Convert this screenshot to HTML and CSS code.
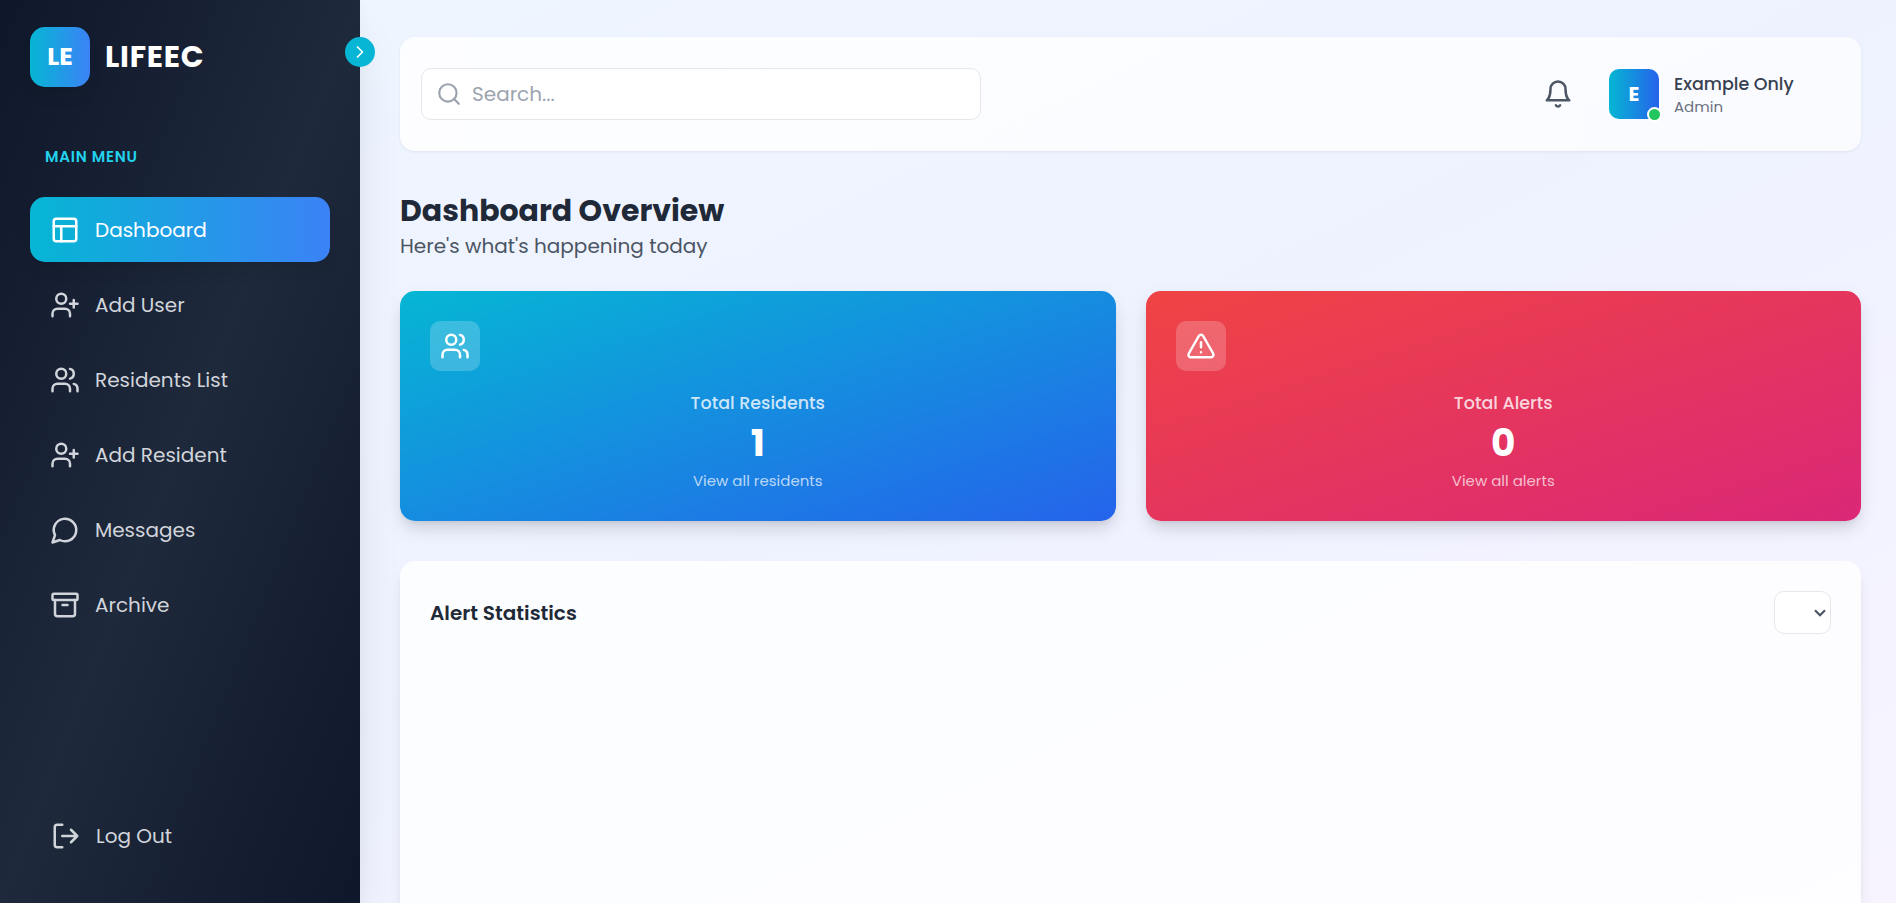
FILE: index.html
```html
<!DOCTYPE html>
<html lang="en">
<head>
<meta charset="utf-8">
<title>LIFEEC Dashboard</title>
<link rel="stylesheet" href="styles.css">
</head>
<body>
<svg class="sprite" aria-hidden="true">
  <symbol id="i-layout" viewBox="0 0 24 24"><rect x="3" y="3" width="18" height="18" rx="2"/><path d="M3 9h18M9 21V9"/></symbol>
  <symbol id="i-user-plus" viewBox="0 0 24 24"><path d="M16 21v-2a4 4 0 0 0-4-4H6a4 4 0 0 0-4 4v2"/><circle cx="9" cy="7" r="4"/><path d="M19 8v6M22 11h-6"/></symbol>
  <symbol id="i-users" viewBox="0 0 24 24"><path d="M16 21v-2a4 4 0 0 0-4-4H6a4 4 0 0 0-4 4v2"/><circle cx="9" cy="7" r="4"/><path d="M22 21v-2a4 4 0 0 0-3-3.87M16 3.13a4 4 0 0 1 0 7.75"/></symbol>
  <symbol id="i-message" viewBox="0 0 24 24"><path d="M7.9 20A9 9 0 1 0 4 16.1L2 22Z"/></symbol>
  <symbol id="i-archive" viewBox="0 0 24 24"><rect x="2" y="3" width="20" height="5" rx="1"/><path d="M4 8v11a2 2 0 0 0 2 2h12a2 2 0 0 0 2-2V8M10 12h4"/></symbol>
  <symbol id="i-logout" viewBox="0 0 24 24"><path d="M9 21H5a2 2 0 0 1-2-2V5a2 2 0 0 1 2-2h4M16 17l5-5-5-5M21 12H9"/></symbol>
  <symbol id="i-search" viewBox="0 0 24 24"><circle cx="11" cy="11" r="8"/><path d="m21 21-4.3-4.3"/></symbol>
  <symbol id="i-bell" viewBox="0 0 24 24"><path d="M6 8a6 6 0 0 1 12 0c0 7 3 9 3 9H3s3-2 3-9M10.3 21a1.94 1.94 0 0 0 3.4 0"/></symbol>
  <symbol id="i-alert" viewBox="0 0 24 24"><path d="m21.73 18-8-14a2 2 0 0 0-3.48 0l-8 14A2 2 0 0 0 4 21h16a2 2 0 0 0 1.73-3M12 9v4M12 17h.01"/></symbol>
  <symbol id="i-right" viewBox="0 0 24 24"><path d="m9 18 6-6-6-6"/></symbol>
</svg>

<div class="app">
  <aside class="sidebar">
    <div class="brand">
      <div class="brand-mark">LE</div>
      <span class="brand-name">LIFEEC</span>
    </div>
    <button class="toggle" aria-label="Toggle sidebar"><svg class="icon"><use href="#i-right"/></svg></button>
    <div class="menu-label">MAIN MENU</div>
    <nav class="nav">
      <a class="nav-item active"><svg class="icon"><use href="#i-layout"/></svg><span>Dashboard</span></a>
      <a class="nav-item"><svg class="icon"><use href="#i-user-plus"/></svg><span>Add User</span></a>
      <a class="nav-item"><svg class="icon"><use href="#i-users"/></svg><span>Residents List</span></a>
      <a class="nav-item"><svg class="icon"><use href="#i-user-plus"/></svg><span>Add Resident</span></a>
      <a class="nav-item"><svg class="icon"><use href="#i-message"/></svg><span>Messages</span></a>
      <a class="nav-item"><svg class="icon"><use href="#i-archive"/></svg><span>Archive</span></a>
    </nav>
    <a class="nav-item logout"><svg class="icon"><use href="#i-logout"/></svg><span>Log Out</span></a>
  </aside>

  <main class="main">
    <header class="topbar">
      <div class="search">
        <svg class="icon"><use href="#i-search"/></svg>
        <span>Search...</span>
      </div>
      <div class="account">
        <svg class="icon bell"><use href="#i-bell"/></svg>
        <div class="avatar">E<i class="status"></i></div>
        <div class="who">
          <div class="who-name">Example Only</div>
          <div class="who-role">Admin</div>
        </div>
      </div>
    </header>

    <section class="heading">
      <h1>Dashboard Overview</h1>
      <p>Here's what's happening today</p>
    </section>

    <section class="cards">
      <article class="card residents">
        <div class="card-icon"><svg class="icon"><use href="#i-users"/></svg></div>
        <div class="card-title">Total Residents</div>
        <div class="card-value">1</div>
        <div class="card-link">View all residents</div>
      </article>
      <article class="card alerts">
        <div class="card-icon"><svg class="icon"><use href="#i-alert"/></svg></div>
        <div class="card-title">Total Alerts</div>
        <div class="card-value">0</div>
        <div class="card-link">View all alerts</div>
      </article>
    </section>

    <section class="panel">
      <div class="panel-head">
        <h2>Alert Statistics</h2>
        <div class="select"><svg viewBox="0 0 12 8"><path d="M1 1.2l5 5 5-5"/></svg></div>
      </div>
    </section>
  </main>
</div>
</body>
</html>
```

FILE: styles.css
```css
* { box-sizing: border-box; margin: 0; padding: 0; }

body {
  font-family: Poppins, Inter, "Open Sans", sans-serif;
  font-size: 20px;
  line-height: 30px;
  height: 903px;
  overflow: hidden;
}

.sprite { display: none; }

.icon {
  width: 30px;
  height: 30px;
  flex: none;
  fill: none;
  stroke: currentColor;
  stroke-width: 2;
  stroke-linecap: round;
  stroke-linejoin: round;
}

.app {
  display: flex;
  height: 903px;
  background: linear-gradient(to bottom right, #eff6ff, #eef2ff 50%, #f7f4ff);
}

/* Sidebar */
.sidebar {
  position: relative;
  z-index: 2;
  display: flex;
  flex-direction: column;
  width: 360px;
  flex: none;
  padding: 27px 30px 35px;
  background: linear-gradient(to bottom right, #0f172a, #1e293b 50%, #0f172a);
  box-shadow: 0 25px 50px -12px rgba(0, 0, 0, .12), 0 0 14px rgba(0, 0, 0, .03);
}

.brand { display: flex; align-items: center; gap: 15px; height: 60px; }

.brand-mark {
  display: grid;
  place-items: center;
  width: 60px;
  height: 60px;
  border-radius: 15px;
  background: linear-gradient(to right, #06b6d4, #3b82f6);
  box-shadow: 0 10px 15px -3px rgba(0, 0, 0, .1);
  color: #fff;
  font-size: 25px;
  font-weight: 700;
}

.brand-name { color: #fff; font-size: 30px; font-weight: 700; letter-spacing: .025em; }

.toggle {
  position: absolute;
  top: 37px;
  right: -15px;
  display: grid;
  place-items: center;
  width: 30px;
  height: 30px;
  border: 0;
  border-radius: 50%;
  background: #06b6d4;
  color: #fff;
}

.toggle .icon { width: 20px; height: 20px; }

.menu-label {
  margin: 55px 0 25px 15px;
  color: #22d3ee;
  font-size: 15px;
  font-weight: 600;
  letter-spacing: .05em;
}

.nav { display: flex; flex-direction: column; gap: 10px; }

.nav-item {
  display: flex;
  align-items: center;
  gap: 15px;
  height: 65px;
  padding: 0 20px;
  border-radius: 15px;
  color: #d1d5db;
}

.nav-item.active {
  background: linear-gradient(to right, #06b6d4, #3b82f6);
  box-shadow: 0 10px 15px -3px rgba(0, 0, 0, .1);
  color: #fff;
}

.logout { margin-top: auto; padding-left: 21px; }

/* Main column */
.main {
  display: flex;
  flex: 1;
  flex-direction: column;
  padding: 37px 35px 0 40px;
}

.topbar {
  display: flex;
  flex: none;
  align-items: center;
  justify-content: space-between;
  height: 114px;
  padding: 0 67px 0 21px;
  border-radius: 15px;
  background: linear-gradient(to right, rgba(255, 255, 255, .85), rgba(255, 255, 255, .7));
  box-shadow: 0 1px 3px rgba(0, 0, 0, .07);
}

.search {
  display: flex;
  align-items: center;
  gap: 10px;
  width: 560px;
  height: 52px;
  padding: 0 14px;
  border: 1px solid #e5e7eb;
  border-radius: 10px;
  background: #fff;
  color: #9ca3af;
}

.search .icon { width: 26px; height: 26px; }

.account { display: flex; align-items: center; }
.bell { margin-right: 36px; color: #4b5563; }

.avatar {
  position: relative;
  display: grid;
  place-items: center;
  width: 50px;
  height: 50px;
  margin-right: 15px;
  border-radius: 10px;
  background: linear-gradient(to right, #06b6d4, #2563eb);
  color: #fff;
  font-weight: 700;
}

.status {
  position: absolute;
  right: -3px;
  bottom: -3px;
  width: 15px;
  height: 15px;
  border: 2px solid #fff;
  border-radius: 50%;
  background: #22c55e;
}

.who { width: 120px; white-space: nowrap; }
.who-name { color: #374151; font-size: 17.5px; font-weight: 500; line-height: 25px; }
.who-role { color: #6b7280; font-size: 15px; line-height: 20px; }

.heading { flex: none; height: 140px; padding-top: 42px; }
.heading h1 { color: #1f2937; font-size: 30px; font-weight: 700; line-height: 36px; }
.heading p { color: #4b5563; line-height: 34px; }

.cards { display: grid; flex: none; grid-template-columns: 1fr 1fr; gap: 30px; }

.card {
  height: 230px;
  padding: 30px;
  border-radius: 15px;
  box-shadow: 0 10px 15px -3px rgba(0, 0, 0, .1), 0 4px 6px -4px rgba(0, 0, 0, .1), 0 8px 24px rgba(0, 0, 0, .05);
  color: #fff;
  text-align: center;
}

.residents { background: linear-gradient(to bottom right, #06b6d4, #2563eb); }
.alerts { background: linear-gradient(to bottom right, #ef4444, #db2777); }

.card-icon {
  display: grid;
  place-items: center;
  width: 50px;
  height: 50px;
  margin-bottom: 20px;
  border-radius: 10px;
  background: rgba(255, 255, 255, .2);
}

.card-title { color: rgba(255, 255, 255, .8); font-size: 17.5px; font-weight: 500; line-height: 25px; }
.card-value { margin: 5px 0; font-size: 37.5px; font-weight: 700; line-height: 45px; }
.card-link { color: rgba(255, 255, 255, .7); font-size: 15px; line-height: 20px; }

.panel {
  flex: 1;
  margin-top: 40px;
  padding: 30px;
  border-radius: 15px 15px 0 0;
  background: rgba(255, 255, 255, .8);
  box-shadow: 0 10px 15px -3px rgba(0, 0, 0, .1), 0 4px 6px -4px rgba(0, 0, 0, .1);
}

.panel-head { display: flex; align-items: center; justify-content: space-between; }
.panel h2 { color: #1f2937; font-size: 20px; font-weight: 600; }

.select {
  display: flex;
  align-items: center;
  justify-content: flex-end;
  width: 57px;
  height: 43px;
  padding-right: 4px;
  border: 1px solid #e5e7eb;
  border-radius: 10px;
  background: #fff;
}

.select svg { width: 12px; height: 8px; fill: none; stroke: #4b5563; stroke-width: 2.2; }
```
